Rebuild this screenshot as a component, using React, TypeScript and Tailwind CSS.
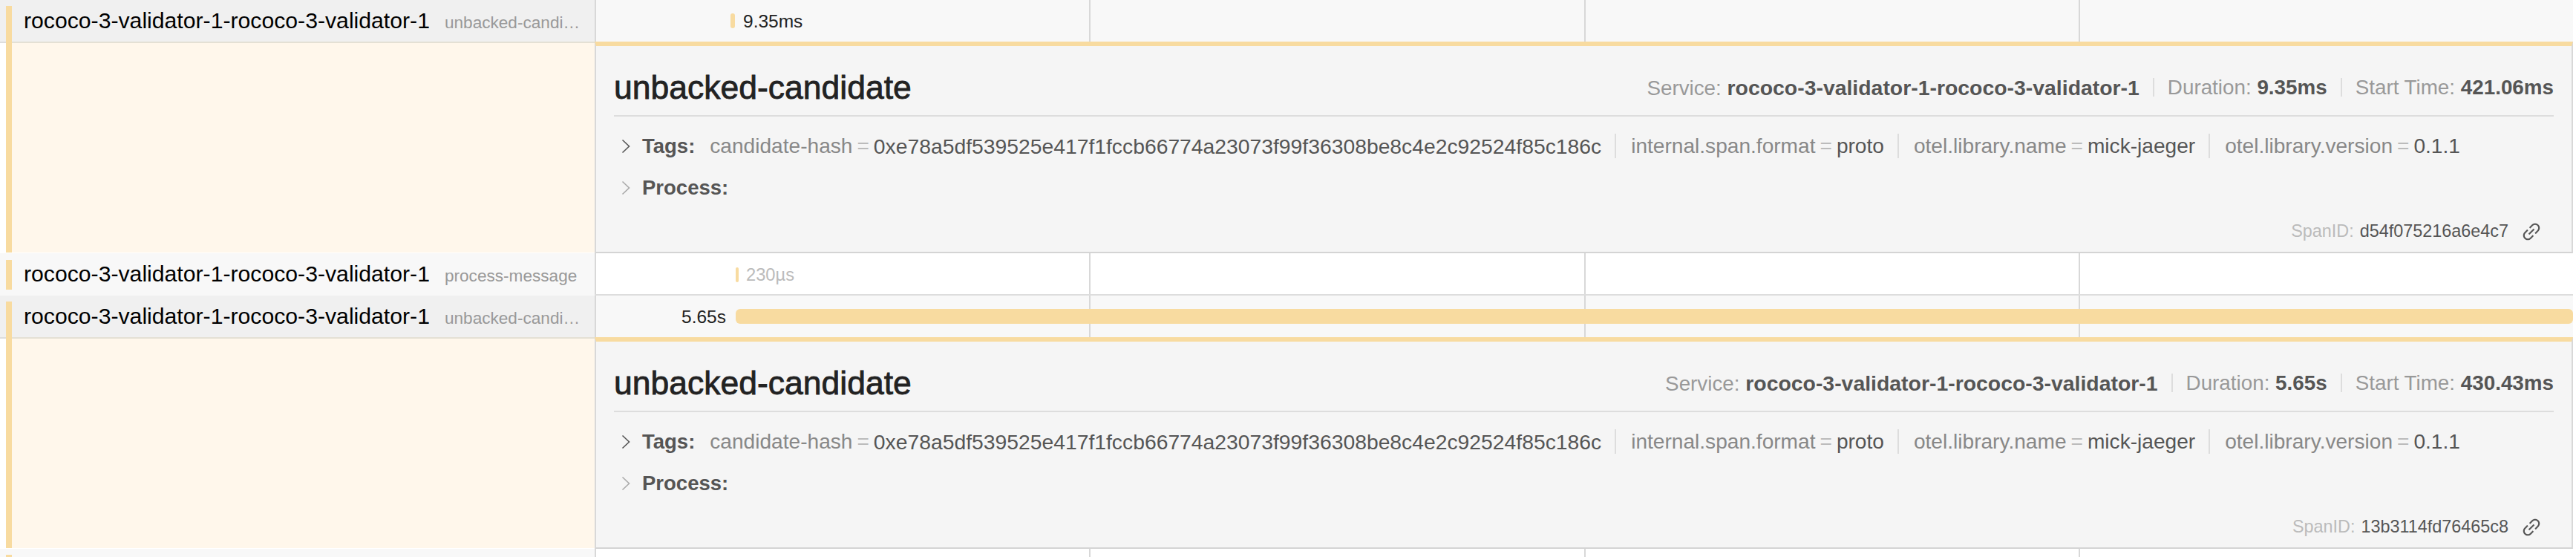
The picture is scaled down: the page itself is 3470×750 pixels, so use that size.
import type { ReactNode } from "react";
import { AiOutlineLink } from "react-icons/ai";

const SERVICE = "rococo-3-validator-1-rococo-3-validator-1";
const GOLD = "bg-[#f8dba0]";

const tags = [
  { key: "candidate-hash", value: "0xe78a5df539525e417f1fccb66774a23073f99f36308be8c4e2c92524f85c186c" },
  { key: "internal.span.format", value: "proto" },
  { key: "otel.library.name", value: "mick-jaeger" },
  { key: "otel.library.version", value: "0.1.1" },
];

// tick lines behind the bars, one column per quarter of the timeline
function Ticks() {
  return (
    <div className="absolute inset-0 grid grid-cols-4">
      <div className="border-l-2 border-[#d8d8d8]" />
      <div className="border-l-2 border-[#d8d8d8]" />
      <div className="border-l-2 border-[#d8d8d8]" />
      <div className="border-l-2 border-[#d8d8d8]" />
    </div>
  );
}

function SpanName({ operation, barClass }: { operation?: string; barClass: string }) {
  return (
    <div className="flex w-[801px] shrink-0 pl-2">
      <div className={`w-2 shrink-0 ${GOLD} ${barClass}`} />
      {operation && (
        <div className="ml-4 flex min-w-0 flex-1 items-baseline gap-5 pr-[13px] leading-[56px]">
          <span className="shrink-0 text-[30.2px] text-black">{SERVICE}</span>
          <span className="min-w-0 truncate text-[22.6px] text-[#999999]">{operation}</span>
        </div>
      )}
    </div>
  );
}

function Row({
  operation,
  active,
  height,
  barClass,
  children,
  paneClass,
}: {
  operation?: string;
  active?: boolean;
  height: string;
  barClass: string;
  children?: ReactNode;
  paneClass: string;
}) {
  return (
    <div className={`flex ${height}`}>
      <div className={`flex ${active ? "bg-[#f0f0f0]" : "bg-[#f8f8f8]"}`}>
        <SpanName operation={operation} barClass={barClass} />
      </div>
      <div className={`relative flex flex-1 overflow-hidden ${active ? "bg-[#f8f8f8]" : "bg-white"} ${paneClass}`}>
        <Ticks />
        <div className="relative flex h-5 flex-1 items-center">{children}</div>
      </div>
    </div>
  );
}

function Meta({
  label,
  value,
  valueClass,
  last,
}: {
  label: string;
  value: string;
  valueClass?: string;
  last?: boolean;
}) {
  return (
    <>
      <span className="text-[#999999]">
        {label}: <span className={`font-bold text-[#555555] ${valueClass ?? ""}`}>{value}</span>
      </span>
      {!last && <span className="mx-[18px] h-[25px] w-[2px] bg-[#dddddd]" />}
    </>
  );
}

function Chevron({ color }: { color: string }) {
  return (
    <svg width="12" height="20" viewBox="0 0 12 20" fill="none" className="mr-4 ml-[10px] shrink-0">
      <path d="M1.5 1.5 L10.5 10 L1.5 18.5" stroke={color} strokeWidth="1.6" />
    </svg>
  );
}

function Detail({
  duration,
  start,
  spanId,
}: {
  duration: string;
  start: string;
  spanId: string;
}) {
  return (
    <div className="flex h-[285px]">
      <div className="flex w-[801px] shrink-0 pb-px">
        <div className="w-2 border-t-2 border-[#dddddd] bg-white" />
        <div className={`w-2 ${GOLD}`} />
        <div className="flex-1 border-t-2 border-[#e4e0d4] bg-[#fff7eb]" />
      </div>
      <div className="flex-1 border-x-2 border-t-[6px] border-b-2 border-x-[#d8d8d8] border-t-[#f8dba0] border-b-[#d4d4d4] bg-[#f5f5f5] px-6">
        <div className="flex h-[95px] items-center justify-between border-b-2 border-[#dddddd] pt-[19px]">
          <h2 className="text-[44.5px] leading-none text-[#222222] [-webkit-text-stroke:0.8px_#222222]">
            unbacked-candidate
          </h2>
          <div className="flex items-center text-[27.8px] leading-none">
            <Meta label="Service" value={SERVICE} valueClass="text-[28.4px]" />
            <Meta label="Duration" value={duration} />
            <Meta label="Start Time" value={start} last />
          </div>
        </div>
        <div className="mt-3 flex h-14 items-center text-[28.1px]">
          <Chevron color="#555555" />
          <span className="mr-5 text-[27.5px] font-bold text-[#555555]">Tags:</span>
          {tags.map((tag, i) => (
            <div key={tag.key} className="flex items-center">
              {i > 0 && <span className="mr-5 ml-[18px] h-[33px] w-[2px] bg-[#dddddd]" />}
              <span className="text-[#888888]">{tag.key}</span>
              <span className="mx-[6px] text-[#bbbbbb]">=</span>
              <span className={i === 0 ? "text-[28.3px] text-[#555555]" : "text-[#555555]"}>{tag.value}</span>
            </div>
          ))}
        </div>
        <div className="flex h-14 items-center">
          <Chevron color="#aaaaaa" />
          <span className="text-[27.5px] font-bold text-[#555555]">Process:</span>
        </div>
        <div className="flex h-[56px] items-center justify-end pt-[6px] pr-[15px] text-[23.4px]">
          <span className="text-[#bbbbbb]">SpanID:</span>
          <span className="ml-2 text-[#555555]">{spanId}</span>
          <AiOutlineLink className="ml-[16px] size-[30px] text-[#555555]" />
        </div>
      </div>
    </div>
  );
}

export default function App() {
  return (
    <div className="h-[750px] w-[3470px] overflow-hidden bg-white font-['Liberation_Sans',Arial,sans-serif]">
      <div className="w-[3466px]">
        <Row
          operation="unbacked-candidate"
          active
          height="h-14"
          barClass="mt-2"
          paneClass="pt-[18px] pl-[183px]"
        >
          <div className={`h-5 w-1.5 rounded-sm ${GOLD}`} />
          <span className="ml-[11px] pt-[2px] text-[24.5px] text-[#222222]">9.35ms</span>
        </Row>
        <Detail duration="9.35ms" start="421.06ms" spanId="d54f075216a6e4c7" />

        <Row
          operation="process-message"
          height="h-[57px]"
          barClass="mt-[9px] mb-2"
          paneClass="border-b-2 border-[#dddddd] pt-[19px] pl-[190px]"
        >
          <div className={`h-5 w-1 rounded-sm ${GOLD}`} />
          <span className="ml-2.5 pt-[2px] text-[23.7px] text-[#bbbbbb]">230µs</span>
        </Row>
        <Row
          operation="unbacked-candidate"
          active
          height="h-14"
          barClass="mt-2"
          paneClass="pt-[18px] pl-[117px]"
        >
          <span className="pt-[2px] text-[24.5px] text-[#222222]">5.65s</span>
          <div className={`ml-[13px] h-5 flex-1 rounded-md ${GOLD}`} />
        </Row>
        <Detail duration="5.65s" start="430.43ms" spanId="13b3114fd76465c8" />

        <Row height="h-[11px]" barClass="mt-2" paneClass="" />
      </div>
    </div>
  );
}
